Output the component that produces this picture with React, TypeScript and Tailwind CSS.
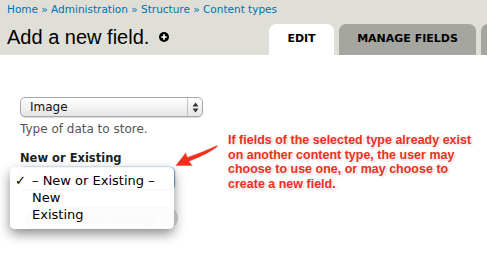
const font = { fontFamily: '"DejaVu Sans", Verdana, sans-serif' };

const PlusIcon = () => (
  <svg width="10" height="10" viewBox="0 0 12 12" className="ml-[10px] mb-[1px]">
    <circle cx="6" cy="6" r="6" fill="#000" />
    <path d="M6 2.8v6.4M2.8 6h6.4" stroke="#fff" strokeWidth="2" />
  </svg>
);

const SelectArrows = () => (
  <svg width="7" height="11" viewBox="0 0 7 11">
    <path d="M3.5 0.5L6.5 4.5H0.5Z" fill="#333" />
    <path d="M3.5 10.5L6.5 6.5H0.5Z" fill="#333" />
  </svg>
);

const Arrow = () => (
  <svg
    width="64"
    height="30"
    viewBox="0 0 64 30"
    className="absolute left-[172px] top-[140px]"
  >
    <path
      d="M3 26 L14 12 L15.5 17 Q35 10 45 5 L46 6.5 Q37 14 17.5 21.5 L21 26 Z"
      fill="#f0301f"
      stroke="#fff"
      strokeWidth="0.6"
    />
  </svg>
);

export default function App() {
  return (
    <div className="relative w-[487px] h-[253px] overflow-hidden bg-white" style={font}>
      {/* header */}
      <div className="bg-[#dfdfd8] h-[55px] pl-[7px]">
        <div className="pt-[2px] text-[10.5px] leading-[14px] text-[#0071b3] whitespace-nowrap">
          Home » Administration » Structure » Content types
        </div>
        <div className="flex items-end justify-between h-[39px]">
          <div className="flex items-center pb-[6px]">
            <h1
              className="text-[20px] leading-[24px] text-black"
              style={{ fontFamily: '"Liberation Sans", Arial, sans-serif' }}
            >
              Add a new field.
            </h1>
            <PlusIcon />
          </div>
          <div className="flex items-end gap-[5px] -mr-[14px]">
            <div className="w-[65px] h-[31px] bg-white rounded-t-[7px] flex items-center justify-center text-[11px] font-bold text-black">
              EDIT
            </div>
            <div className="w-[137px] h-[31px] bg-[#a6a6a0] rounded-t-[7px] flex items-center justify-center text-[11px] font-bold text-black">
              MANAGE FIELDS
            </div>
            <div className="w-[20px] h-[31px] bg-[#a6a6a0] rounded-t-[7px]" />
          </div>
        </div>
      </div>

      {/* form */}
      <div className="pl-[20px] pt-[42px]">
        <div className="w-[183px] h-[20px] rounded-[5px] border border-[#a8a8a8] bg-gradient-to-b from-white to-[#e6e6e6] flex items-center shadow-[0_1px_1px_rgba(0,0,0,0.15)]">
          <span className="flex-1 pl-[9px] text-[12px] text-[#111]">Image</span>
          <span className="w-[15px] h-full border-l border-[#c4c4c4] flex items-center justify-center">
            <SelectArrows />
          </span>
        </div>
        <div className="mt-[4px] text-[12px] leading-[16px] text-[#555]">Type of data to store.</div>
        <div className="mt-[14px] text-[11.5px] leading-[14px] font-bold text-[#222]">New or Existing</div>
        <div className="mt-[2px] w-[155px] h-[23px] rounded-[5px] border border-[#7aaee0] shadow-[0_0_2px_#8ab8e8]" />
        <div className="mt-[17px] ml-[5px] w-[153px] h-[22px] rounded-full bg-[#e4e4e4] border border-[#c8c8c8] flex items-center justify-center text-[12px] text-[#bbb]">
          Save field settings
        </div>
      </div>

      {/* dropdown */}
      <div className="absolute left-[10px] top-[167px] w-[164px] h-[62px] rounded-[5px] bg-white/90 shadow-[0_5px_12px_rgba(0,0,0,0.45)] pt-[5px] text-[13px] leading-[17px] text-black">
        <div className="flex">
          <span className="w-[22px] pl-[5px]">✓</span>
          <span>– New or Existing –</span>
        </div>
        <div className="pl-[22px]">New</div>
        <div className="pl-[22px]">Existing</div>
      </div>

      <Arrow />

      <div
        className="absolute left-[228px] top-[133px] text-[12.5px] leading-[14.5px] font-bold text-[#f0301f] whitespace-nowrap"
        style={{
          fontFamily: '"Liberation Sans", Arial, sans-serif',
          textShadow: "1px 1px 0 #fff, 1px 1px 2px rgba(0,0,0,0.35)",
        }}
      >
        If fields of the selected type already exist
        <br />
        on another content type, the user may
        <br />
        choose to use one, or may choose to
        <br />
        create a new field.
      </div>
    </div>
  );
}
